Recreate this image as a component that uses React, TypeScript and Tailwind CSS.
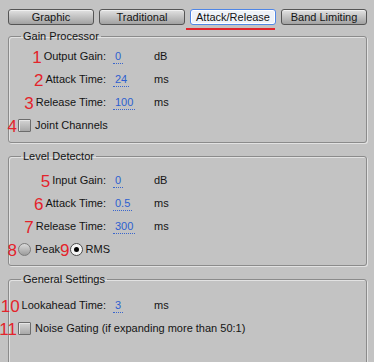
import React from 'react';

const TABS = ['Graphic', 'Traditional', 'Attack/Release', 'Band Limiting'];

const Num: React.FC<{ children: React.ReactNode }> = ({ children }) => (
  <span className="text-[17px] leading-none text-[#e3232b] translate-y-[1px]">{children}</span>
);

const Value: React.FC<{ children: React.ReactNode }> = ({ children }) => (
  <span className="inline-block border-b border-dotted border-[#3a66cc] px-[2px] leading-[13px] text-[#2d5fd0]">
    {children}
  </span>
);

const ParamRow: React.FC<{ n: string; label: string; value: string; unit: string }> = ({ n, label, value, unit }) => (
  <div className="flex h-[23px] items-center">
    <div className="flex w-[97px] shrink-0 items-center justify-end whitespace-nowrap">
      <Num>{n}</Num>
      <span className="ml-[2px]">{label}</span>
    </div>
    <div className="ml-[7px] w-[41px] shrink-0">
      <Value>{value}</Value>
    </div>
    <span>{unit}</span>
  </div>
);

const CheckBox = () => (
  <span className="ml-[1px] block h-[13px] w-[13px] shrink-0 rounded-[1px] border border-[#6c6c6c] bg-gradient-to-b from-[#d4d4d4] to-[#a8a8a8] shadow-[inset_1px_1px_0_#e6e6e6]" />
);

const Radio: React.FC<{ checked?: boolean; className?: string }> = ({ checked, className }) =>
  checked ? (
    <span className={`flex h-[13px] w-[13px] shrink-0 items-center justify-center rounded-full border border-[#4a4a4a] bg-[#f4f4f4] ${className ?? ''}`}>
      <span className="h-[5px] w-[5px] rounded-full bg-black" />
    </span>
  ) : (
    <span className={`block h-[13px] w-[13px] shrink-0 rounded-full border border-[#7c7c7c] bg-gradient-to-b from-[#dadada] to-[#9c9c9c] ${className ?? ''}`} />
  );

const NumCell: React.FC<{ children: React.ReactNode }> = ({ children }) => (
  <div className="flex w-[8px] shrink-0 justify-end whitespace-nowrap">
    <Num>{children}</Num>
  </div>
);

const Group: React.FC<{ title: string; className?: string; children: React.ReactNode }> = ({ title, className, children }) => (
  <fieldset
    className={`ml-[8px] mr-[7px] rounded-[3px] border border-[#8b8b8b] shadow-[inset_1px_1px_0_#e2e2e2,1px_1px_0_#e2e2e2] ${className ?? ''}`}
  >
    <legend className="ml-[12px] px-[2px] leading-[14px]">{title}</legend>
    {children}
  </fieldset>
);

export default function App() {
  return (
    <div
      className="h-[362px] w-[374px] overflow-hidden bg-[#c3c3c3] text-[11px] text-[#141414]"
      style={{ fontFamily: '"Liberation Sans", Arial, sans-serif' }}
    >
      {/* Tabs */}
      <div className="flex gap-[5px] pl-[8px] pt-[9px]">
        {TABS.map((t) => {
          const active = t === 'Attack/Release';
          return (
            <div
              key={t}
              className={`relative flex h-[16px] w-[86px] items-center justify-center rounded-[3px] border leading-none ${
                active
                  ? 'border-[#4f86e6] bg-[#eef2f8] shadow-[inset_0_0_0_1px_#ffffff]'
                  : 'border-[#555555] bg-gradient-to-b from-[#e2e2e2] to-[#a2a2a2] shadow-[inset_0_1px_0_#f0f0f0]'
              }`}
            >
              {t}
              {active && <span className="absolute left-[-5px] right-[0px] top-[18px] h-[2px] bg-[#e3232b]" />}
            </div>
          );
        })}
      </div>

      <div className="mt-[4px] flex flex-col gap-[6px]">
        <Group title="Gain Processor" className="pb-[5px]">
          <div className="pt-[2px]">
            <ParamRow n="1" label="Output Gain:" value="0" unit="dB" />
            <ParamRow n="2" label="Attack Time:" value="24" unit="ms" />
            <ParamRow n="3" label="Release Time:" value="100" unit="ms" />
            <div className="flex h-[23px] items-center">
              <NumCell>4</NumCell>
              <CheckBox />
              <span className="ml-[4px]">Joint Channels</span>
            </div>
          </div>
        </Group>

        <Group title="Level Detector" className="pb-[4px]">
          <div className="pt-[6px]">
            <ParamRow n="5" label="Input Gain:" value="0" unit="dB" />
            <ParamRow n="6" label="Attack Time:" value="0.5" unit="ms" />
            <ParamRow n="7" label="Release Time:" value="300" unit="ms" />
            <div className="flex h-[23px] items-center">
              <NumCell>8</NumCell>
              <Radio className="ml-[1px]" />
              <span className="ml-[4px]">Peak</span>
              <Num>9</Num>
              <Radio checked />
              <span className="ml-[3px]">RMS</span>
            </div>
          </div>
        </Group>

        <Group title="General Settings" className="pb-[30px]">
          <div className="pt-[8px]">
            <ParamRow n="10" label="Lookahead Time:" value="3" unit="ms" />
            <div className="flex h-[23px] items-center">
              <NumCell>11</NumCell>
              <CheckBox />
              <span className="ml-[4px]">Noise Gating (if expanding more than 50:1)</span>
            </div>
          </div>
        </Group>
      </div>
    </div>
  );
}
